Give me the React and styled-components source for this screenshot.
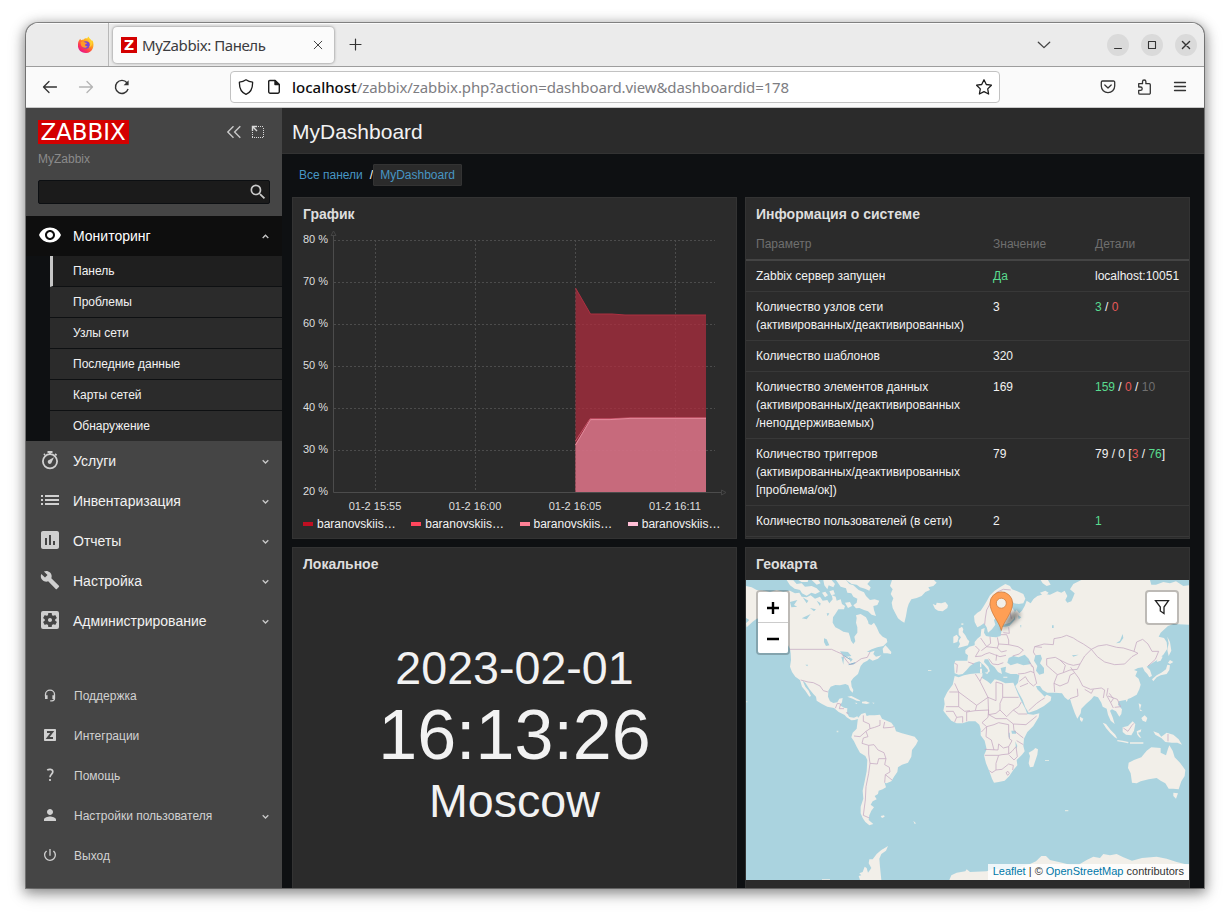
import React from "react";
import styled, { createGlobalStyle, css } from "styled-components";
import {
  MdVisibility, MdAssessment, MdBuild,
  MdSettingsApplications, MdPerson, MdPowerSettingsNew, MdSearch,
} from "react-icons/md";

const Global = createGlobalStyle`
  * { box-sizing: border-box; }
  html, body { margin: 0; background: #fff; }
  body { font: 12px/18px "Liberation Sans", Arial, sans-serif; color: #f2f2f2; overflow: hidden; }
`;

const Desktop = styled.div`
  height: 917px;
  padding: 23px 26px 29px;
`;
const Window = styled.div`
  width: 1178px;
  height: 865px;
  display: flex;
  flex-direction: column;
  overflow: hidden;
  border-radius: 12px 12px 0 0;
  background: #0e1012;
  box-shadow: 0 0 0 1px rgba(0,0,0,.38), 0 3px 12px 2px rgba(0,0,0,.36), 0 5px 20px rgba(0,0,0,.18);
`;

/* Browser chrome */
const TabBar = styled.div`
  height: 44px;
  flex: none;
  display: flex;
  align-items: center;
  background: #ebebeb;
  border-bottom: 1px solid #9d9d9d;
  box-shadow: inset 0 1px #fafafa;
`;
const PinnedTab = styled.div`
  width: 83px;
  height: 43px;
  padding: 13px 0 0 51px;
  border-right: 1px solid #b8b8b8;
`;
const Tab = styled.div`
  width: 221px;
  height: 36px;
  margin-left: 4px;
  padding: 0 8px 0 8px;
  display: flex;
  align-items: center;
  border-radius: 4px;
  background: #fbfbfb;
  box-shadow: 0 0 3px rgba(0,0,0,.5);
  color: #3c3c40;
`;
const TabTitle = styled.span`
  flex: 1;
  margin-left: 5px;
  font: 15px/20px "Noto Sans", "Open Sans", sans-serif;
  letter-spacing: -0.42px;
  white-space: nowrap;
`;
const Favicon = styled.span`
  width: 16px;
  height: 16px;
  background: #d40000;
  color: #fff;
  font: bold 14px/16px "DejaVu Sans", sans-serif;
  text-align: center;
`;
const NewTab = styled.div`
  margin-left: 14px;
  height: 16px;
`;
const WindowControls = styled.div`
  margin-left: auto;
  display: flex;
  align-items: center;
  padding-right: 7px;
  gap: 12px;
`;
const AllTabs = styled.span`
  display: flex;
  margin-right: 43px;
`;
const RoundButton = styled.span`
  width: 22px;
  height: 22px;
  border-radius: 50%;
  background: #dadada;
  display: flex;
`;
const NavBar = styled.div`
  height: 41px;
  flex: none;
  display: flex;
  align-items: center;
  padding: 0 16px;
  background: #fafafa;
  border-bottom: 1px solid #c9c9c9;
`;
const NavButtons = styled.div`
  display: flex;
  gap: 20px;
  width: 188px;
`;
const AddressBar = styled.div`
  width: 770px;
  height: 32px;
  display: flex;
  align-items: center;
  padding: 0 7px;
  background: #fff;
  border: 1px solid #c2c2c2;
  border-radius: 4px;
`;
const Url = styled.span`
  flex: 1;
  margin-left: 10px;
  color: #7d7d82;
  font: 15px/20px "Noto Sans", "Open Sans", sans-serif;
  letter-spacing: -0.11px;
  white-space: nowrap;
  b { color: #0c0c0d; font-weight: 500; letter-spacing: 0; }
`;
const PageIcon = styled.span`
  display: flex;
  margin-left: 12px;
`;
const ToolIcons = styled.div`
  display: flex;
  gap: 20px;
  margin-left: auto;
`;

/* Application */
const Page = styled.div`
  flex: 1;
  min-height: 0;
  display: flex;
`;
const Sidebar = styled.aside`
  width: 256px;
  flex: none;
  background: #454545;
`;
const Brand = styled.div`
  height: 108px;
  padding: 12px 12px 0;
`;
const BrandRow = styled.div`
  display: flex;
  align-items: center;
  height: 24px;
`;
const BrandTools = styled.div`
  display: flex;
  gap: 9px;
  margin-left: auto;
  margin-right: 5px;
`;
const ServerName = styled.div`
  margin-top: 6px;
  color: #8b8b8b;
`;
const Search = styled.div`
  height: 24px;
  margin-top: 12px;
  display: flex;
  align-items: center;
  justify-content: flex-end;
  padding-right: 1px;
  color: #c9c9c9;
  background: #1b1b1b;
  border: 1px solid #0c0f12;
  border-radius: 2px;
`;
const MenuRow = styled.div`
  height: 40px;
  display: flex;
  align-items: center;
  padding: 0 12px;
  font-size: ${(p) => (p.$small ? "12px" : "14px")};
  color: ${(p) => (p.$small ? "#d2d2d2" : "#f2f2f2")};
  ${(p) => p.$open && css`background: #0e0e0e; color: #fff;`}
`;
const MenuIcon = styled.span`
  width: 24px;
  display: flex;
  justify-content: center;
  margin-bottom: 2px;
  margin-right: ${(p) => (p.$small ? "12px" : "11px")};
  color: ${(p) => (p.$open ? "#fff" : "#d0d0d0")};
`;
const MenuLabel = styled.span`
  flex: 1;
`;
const Submenu = styled.div`
  padding-left: 24px;
  background: #0e1012;
`;
const SubItem = styled.div`
  height: ${(p) => (p.$last ? "30px" : "31px")};
  padding-left: ${(p) => (p.$active ? "20px" : "23px")};
  line-height: 30px;
  border-left: ${(p) => (p.$active ? "3px solid #c6c6c6" : "0")};
  border-bottom: ${(p) => (p.$last ? "0" : "1px solid #0e1012")};
  background: ${(p) => (p.$active ? "#1f1f1f" : "#2b2b2b")};
`;
const UserMenu = styled.div`
  margin-top: 35px;
`;

const Main = styled.main`
  flex: 1;
  display: flex;
  flex-direction: column;
  min-width: 0;
`;
const Header = styled.header`
  height: 46px;
  flex: none;
  padding: 0 10px;
  background: #2b2b2b;
  border-bottom: 1px solid #333;
  font-size: 21px;
  line-height: 47px;
`;
const Crumbs = styled.nav`
  display: flex;
  flex: none;
  height: 43px;
  padding: 10px 10px 0 17px;
  line-height: 22px;
  color: #fff;
`;
const Crumb = styled.a`
  color: #4796c4;
  ${(p) => p.$boxed && css`
    height: 22px;
    line-height: 20px;
    padding: 0 6px;
    background: #2b2b2b;
    border: 1px solid #333;
    border-radius: 1px;
  `}
`;
const Slash = styled.span`
  margin-left: 7px;
`;
const Grid = styled.div`
  flex: none;
  display: grid;
  grid-template-columns: 445px 445px;
  grid-template-rows: 342px 342px;
  gap: 8px;
  padding-left: 10px;
`;
const Panel = styled.section`
  background: #2b2b2b;
  border: 1px solid #333;
  overflow: hidden;
  min-width: 0;
`;
const PanelTitle = styled.h4`
  margin: 0;
  height: 32px;
  padding-left: 10px;
  font-size: 14px;
  line-height: 32px;
  color: #dedede;
`;
const Legend = styled.div`
  display: flex;
  padding: 2px 0 0 10px;
`;
const LegendItem = styled.div`
  width: 108.3px;
  display: flex;
  align-items: center;
  gap: 4px;
  white-space: nowrap;
  &::before {
    content: "";
    width: 10px;
    height: 4px;
    margin-top: -1px;
    background: ${(p) => p.$color};
  }
`;
const Clock = styled.div`
  padding-top: 61px;
  display: flex;
  flex-direction: column;
  align-items: center;
`;
const ClockLine = styled.div`
  font-size: ${(p) => (p.$big ? "70px" : "46.6px")};
  line-height: ${(p) => (p.$big ? "80px" : "54px")};
  &:last-child { line-height: 52px; }
`;
const Info = styled.div`
  display: grid;
`;
const InfoRow = styled.div`
  display: grid;
  grid-template-columns: 237px 102px 1fr;
  padding: 6px 0 6px 10px;
  border-bottom: 1px solid #383838;
  ${(p) => p.$head && css`
    height: 31px;
    padding-top: 5px;
    border-bottom: 2px solid #444;
    color: #6f6f6f;
  `}
`;
const Tint = styled.span`
  color: ${(p) => ({ green: "#59db8f", red: "#e45959", grey: "#6f6f6f" })[p.$tone]};
`;

const MapBox = styled.div`
  position: relative;
  height: 300px;
  width: 443px;
`;
const ZoomControl = styled.div`
  position: absolute;
  left: 10px;
  top: 10px;
  width: 34px;
  border: 2px solid rgba(0,0,0,.22);
  background-clip: padding-box;
  border-radius: 4px;
  overflow: hidden;
`;
const ZoomButton = styled.div`
  height: ${(p) => (p.$first ? "31px" : "30px")};
  padding-top: 2px;
  border-bottom: ${(p) => (p.$first ? "1px solid #ccc" : "0")};
  background: #fff;
  display: flex;
  align-items: center;
  justify-content: center;
`;
const FilterControl = styled.div`
  position: absolute;
  right: 10px;
  top: 10px;
  width: 34px;
  height: 35px;
  border: 2px solid rgba(0,0,0,.22);
  border-radius: 4px;
  background: #fff;
  background-clip: padding-box;
  display: flex;
  align-items: center;
  justify-content: center;
  padding-bottom: 1px;
`;
const Attribution = styled.div`
  position: absolute;
  right: 0;
  bottom: 0;
  height: 16px;
  padding: 0 5px;
  font-size: 11px;
  line-height: 15px;
  color: #333;
  background: rgba(255,255,255,.8);
  white-space: nowrap;
  a { color: #0078a8; }
`;
const Pin = styled.svg`
  position: absolute;
  left: 243px;
  top: 11px;
`;

const Line = ({ d, size = 16, w = 1.3, color = "#333", ...rest }) => (
  <svg width={size} height={size} viewBox="0 0 16 16" fill="none" stroke={color} strokeWidth={w}
    strokeLinecap="round" strokeLinejoin="round" {...rest}><path d={d} /></svg>
);

const Firefox = () => (
  <svg width="18" height="18" viewBox="0 0 18 18">
    <defs>
      <linearGradient id="fox" x1=".8" y1=".1" x2=".2" y2=".95">
        <stop offset="0" stopColor="#ffe226" /><stop offset=".4" stopColor="#ff9020" />
        <stop offset=".7" stopColor="#ff3b50" /><stop offset="1" stopColor="#e5158b" />
      </linearGradient>
    </defs>
    <path d="M2 4.5 3.2 2.8 4 4.3C5 3.5 6 3.3 7 3.4 7.8 1.8 9.6 2.2 10.2 2.6 10.4 1.5 11 .8 11.6.4 12 2.2 14 3 14.8 4.8L15.6 4.5C18 10 15.5 17 9 17 3.5 17 .5 13 1 8.5 1 7 1.4 5.5 2 4.5Z" fill="url(#fox)" />
    <circle cx="9" cy="9" r="3.7" fill="#7746dc" />
    <path d="M3.5 6.5C5 5 7 5.5 8 6.5L10 7C9.8 8 8.5 8 8 8.6 8 10 9 10.5 10.6 10 9.5 13 5 12 4 9Z" fill="#ff9a28" />
    <path d="M10 3C14 5 14 9 12 11.5 15 10.5 16 7 14.5 5Z" fill="#ffcf34" />
  </svg>
);

const Chevron = ({ up }) => (
  <svg width="9" height="8" viewBox="-.5 0 9 8" fill="none" stroke="#c8c8c8" strokeWidth="1.3">
    <path d={up ? "M1.2 6 4 3.2 6.8 6" : "M1.2 3.2 4 6 6.8 3.2"} />
  </svg>
);

const TimerIcon = () => (
  <svg width="24" height="24" viewBox="0 0 24 24" fill="none" stroke="#d0d0d0">
    <circle cx="12" cy="13.3" r="7.1" strokeWidth="1.8" />
    <path d="M9.5 4h5M12 4v2M17 6l1.6 1.4M6 7l1-1" strokeWidth="1.8" />
    <path d="M16 9.2 13.7 14.2A2 2 0 1 1 11 12Z" fill="#d0d0d0" stroke="none" />
  </svg>
);
const ListIcon = () => (
  <svg width="18" height="10" viewBox="0 0 18 10" stroke="#d0d0d0" strokeWidth="2">
    <path d="M0 1H2M4 1H18M0 5H2M4 5H18M0 9H2M4 9H18" />
  </svg>
);
const Headset = () => (
  <svg width="12" height="13" viewBox="0 0 12 13" fill="none" stroke="#d0d0d0">
    <path d="M1.5 7.5V5.4A4.5 4.3 0 0 1 10.5 5.4V9.3Q10.5 11.8 8 11.8H6.2" strokeWidth="1.3" />
    <path d="M2.3 6.2V10M9.7 6.2V10" strokeWidth="2.6" />
  </svg>
);
const ZSquare = () => (
  <svg width="12" height="12" viewBox="0 0 12 12">
    <rect width="12" height="12" rx=".8" fill="#d0d0d0" />
    <path d="M3 3.1H8.2L3.7 8.9H9" fill="none" stroke="#454545" strokeWidth="2" />
  </svg>
);
const Question = () => (
  <svg width="12" height="14" viewBox="0 0 12 14" fill="none" stroke="#d0d0d0" strokeWidth="1.7">
    <path d="M3.2 2.2C4.8 .9 8.8 .9 8.8 3.8 8.8 6 6 6.2 6 9.3M6 11v2" />
  </svg>
);

const Chart = () => (
  <svg width="443" height="283" viewBox="293 230 443 283" style={{ display: "block" }}>
    <g stroke="#4c4c4c" strokeDasharray="2 2">
      {[240.5, 282.5, 324.5, 366.5, 408.5, 450.5].map((y) => <path key={y} d={`M334 ${y}H715`} />)}
      {[375.5, 475.5, 575.5, 675.5].map((x) => <path key={x} d={`M${x} 240V492`} />)}
    </g>
    <path d="M333.5 235V492.5H721" fill="none" stroke="#4c4c4c" />
    <path d="M331 235.5h5L333.5 231ZM721.5 490v5L726 492.5Z" fill="none" stroke="#454545" />
    <path d="M575.5 288 590.5 314 612 314 625 315H706V492H575.5Z" fill="#b22d3e" fillOpacity=".72" />
    <path d="M575.5 288 590.5 314 612 314 625 315H706" fill="none" stroke="#ad3041" />
    <path d="M575.5 444 590.5 419.3H610L630 418.2H706V492H575.5Z" fill="#dc8094" fillOpacity=".74" />
    <path d="M575.5 441 590 418.8H610L630 417.8H706" fill="none" stroke="#c85268" />
    <path d="M575.5 445 590.5 419.6H610L630 418.4H706" fill="none" stroke="#e48a9b" />
    <g fill="#dedede" fontSize="11" fontFamily="Liberation Sans, Arial, sans-serif">
      {[80, 70, 60, 50, 40, 30, 20].map((v, i) => (
        <text key={v} x="328" y={243 + i * 42} textAnchor="end">{v} %</text>
      ))}
      {["15:55", "16:00", "16:05", "16:11"].map((t, i) => (
        <text key={t} x={375 + i * 100} y="510" textAnchor="middle">01-2 {t}</text>
      ))}
    </g>
  </svg>
);

/* Coastlines, three units to a pixel */
const LAND = [
  // North and Central America
  "M18 138 35 142 50 150 75 152 90 156 110 150 130 155 150 152 165 160 178 158 185 170 200 172 212 166 225 176 240 170 248 182 262 180 268 190 278 178 275 165 287 170 290 182 302 178 306 192 315 198 312 208 295 208 286 222 279 232 278 248 286 262 298 268 310 275 326 278 330 290 333 302 340 312 346 304 343 290 352 278 352 262 348 248 350 234 348 226 362 222 378 232 384 244 386 252 394 255 402 248 410 262 418 280 428 290 440 296 442 306 430 318 412 322 395 328 380 336 392 336 404 332 400 342 408 350 424 346 414 356 398 362 388 356 382 362 370 368 362 378 358 390 354 402 340 414 333 424 335 440 340 450 338 458 330 450 325 436 316 432 300 436 286 435 272 440 265 452 264 470 270 484 280 489 292 487 298 476 308 474 306 487 300 496 312 503 322 505 321 520 328 531 342 533 352 529 356 536 344 540 334 541 320 532 314 525 296 516 282 504 262 500 246 492 230 482 228 470 220 462 208 447 196 428 188 422 196 440 206 452 213 468 208 470 196 452 186 440 180 420 166 410 156 396 150 380 153 360 152 340 150 326 142 312 130 295 118 272 100 250 80 240 62 235 50 236 38 245 20 262 18 250 28 240 18 234Z",
  // Arctic islands
  "M140 120 160 121 170 132 185 130 195 140 215 138 230 145 240 155 226 162 214 158 200 167 186 160 180 150 164 146 150 136Z",
  "M175 120H205L203 126 185 126ZM215 120H235L242 130 230 134ZM250 120H275L285 132 280 142 266 136 262 148 253 136ZM288 120H318L328 132 340 136 356 150 372 157 378 168 390 180 404 178 418 182 412 195 400 198 402 210 408 228 395 224 384 214 372 210 358 204 348 205 340 196 350 188 352 176 340 170 334 160 322 158 318 145 302 140Z",
  "M318 120H392L382 132 392 142 388 152 375 146 360 142 350 134 335 132ZM268 154 280 150 285 163 274 166ZM315 188 330 186 336 198 324 204ZM246 158 256 155 264 166 255 172Z",
  "M428 326 436 316 442 322 454 336 453 342 442 340 430 340Z",
  // Greenland and Iceland
  "M456 120H582L590 128 580 138 565 142 570 150 556 156 545 168 530 174 514 178 506 192 502 205 498 228 493 248 484 243 474 235 466 220 458 204 455 188 460 175 452 162 458 148 450 138Z",
  "M578 192 588 196 590 188 604 190 616 186 624 196 622 204 608 214 594 212 585 206Z",
  // British Isles
  "M656 266 666 260 670 268 668 276 676 286 682 298 688 304 684 316 668 320 654 324 660 312 656 302 663 292 656 284ZM640 290 650 284 656 292 652 306 640 310Z",
  // Caribbean
  "M322 470 334 468 346 474 358 480 362 484 350 482 338 476ZM366 485 378 484 390 489 380 492 366 490ZM396 488 403 488 402 491ZM344 488 352 489 350 492Z",
  // Scandinavia
  "M704 246 702 228 712 218 722 212 730 200 740 184 750 166 764 152 782 140 796 132 810 138 816 148 832 154 850 162 856 176 850 190 836 192 822 190 814 180 814 200 824 214 822 236 810 248 790 254 782 244 782 228 788 208 778 206 772 228 762 240 766 254 756 268 744 278 740 262 732 250 720 258 712 262Z",
  // Eurasia
  "M786 262 782 288 768 292 750 290 738 288 732 278 734 264 724 268 722 288 712 296 704 306 704 316 688 320 676 330 676 340 684 346 682 362 646 362 642 374 644 400 656 404 668 402 680 390 690 378 704 368 718 364 732 376 744 390 742 398 750 394 745 380 732 366 734 358 744 358 752 372 764 382 774 396 786 402 782 384 798 380 796 396 812 402 830 402 838 406 834 428 826 438 836 458 848 480 856 502 866 518 890 510 912 498 932 482 934 470 920 464 914 470 904 460 892 448 888 438 900 438 908 450 922 458 944 458 966 460 974 472 984 480 990 476 996 496 1004 518 1012 536 1022 520 1024 506 1038 492 1054 478 1062 468 1074 472 1084 488 1088 500 1100 506 1104 524 1112 542 1124 552 1118 532 1110 512 1116 508 1128 514 1138 530 1144 522 1146 508 1134 494 1136 484 1144 482 1156 480 1172 474 1190 464 1198 448 1202 434 1196 416 1186 408 1192 394 1182 390 1194 384 1208 382 1214 394 1222 402 1228 412 1236 408 1230 390 1220 380 1236 370 1252 360 1270 344 1282 326 1280 306 1272 294 1256 290 1262 278 1284 258 1300 252 1347 254V136L1330 138 1308 124 1290 130 1270 126 1248 134 1234 134 1230 120H1024L1000 132 990 148 1004 160 1000 170 994 184 982 188 976 180 982 168 974 152 964 158 952 154 930 164 914 162 898 168 880 178 872 190 860 182 854 198 846 212 838 220 830 210 820 222 826 238 808 258Z",
  "M1256 346 1268 350 1262 362 1250 366ZM880 178 892 168 906 164 900 158 916 152 926 158 918 166 902 172 890 180ZM902 120H924L932 134 920 138 908 130Z",
  // Japan and Sakhalin
  "M1290 360 1300 366 1290 372 1284 368ZM1282 374 1290 376 1288 390 1280 402 1262 406 1250 412 1240 424 1236 418 1250 406 1264 398 1278 388ZM1282 290 1290 306 1294 332 1286 348 1282 330 1286 310Z",
  // Mediterranean islands
  "M720 386h6v14h-6ZM720 370h4v12h-4ZM734 398 746 396 742 402ZM790 410h12v3h-12Z",
  // Africa and Madagascar
  "M644 408 656 412 672 406 690 402 712 400 728 400 726 414 742 424 752 432 764 418 780 422 796 430 820 428 824 438 834 462 844 484 856 506 862 522 880 524 898 520 896 532 880 558 862 576 852 596 850 618 854 634 846 644 830 660 832 676 820 690 808 708 794 722 776 726 762 728 756 716 748 694 738 670 732 646 740 628 734 602 722 586 722 568 718 554 706 544 686 544 668 550 650 550 634 542 622 528 610 512 614 492 612 476 622 456 638 434Z",
  "M886 624 894 628 892 644 886 662 880 680 870 682 866 670 870 648 866 638 880 630Z",
  // South America
  "M354 534 364 522 376 518 380 528 388 526 404 526 420 524 426 536 440 542 454 548 464 562 468 574 486 580 508 586 524 590 534 602 528 614 516 630 514 650 504 668 486 674 474 682 472 696 462 710 454 724 440 730 434 728 438 742 428 748 416 752 414 762 404 768 410 778 398 784 392 794 402 802 394 812 388 826 386 840 400 852 388 856 376 846 368 834 362 820 362 800 370 776 368 752 374 724 380 694 382 660 376 648 360 638 350 620 342 604 334 592 338 578 350 566 352 550Z",
  // Southeast Asia and Oceania
  "M1088 548 1098 552 1112 570 1126 584 1132 596 1124 592 1110 578 1098 564ZM1132 600 1148 602 1166 606 1164 610 1146 606 1132 604ZM1148 562 1164 558 1178 544 1186 552 1182 572 1174 586 1158 584 1148 576ZM1190 574 1204 568 1202 576 1194 578 1204 594 1198 592 1192 584ZM1196 490 1204 494 1200 508 1208 514 1200 512ZM1204 534 1214 526 1222 534 1218 546 1208 542ZM1240 574 1256 580 1264 590 1280 578 1300 584 1316 598 1326 614 1312 608 1296 608 1276 606 1264 594 1246 584ZM1156 478h8l-4 8ZM1020 530 1030 536 1026 546 1020 540ZM1170 607h40v4h-40Z",
  "M1166 668 1182 660 1204 652 1220 632 1234 622 1262 624 1262 638 1278 646 1284 626 1288 616 1298 632 1304 652 1320 668 1336 690 1334 708 1324 724 1316 748 1300 746 1286 746 1276 730 1262 722 1250 714 1226 718 1202 724 1190 730 1176 728 1172 700 1164 684ZM1300 758 1314 760 1308 776 1300 768Z",
  // Antarctica
  "M360 1020 356 1008 364 1006 358 1000 368 996 374 980 380 984 384 998 394 984 386 970 388 958 398 958 410 942 424 930 438 922 444 918 438 932 424 942 418 956 420 980 424 1020ZM628 1020 634 1006 650 998 676 994 680 988 690 996 740 994 760 986 800 990 830 984 870 972 888 964 904 948 918 948 930 960 966 968 990 974 1016 974 1040 960 1060 950 1080 954 1090 942 1110 946 1130 942 1150 952 1176 962 1206 954 1250 950 1280 956 1310 966 1334 972 1347 974V1020ZM246 1018h24v4h-24ZM422 828l10-2 2 4-8 4ZM520 842l8 8-4 2Z",
];
const WATER = [
  "M802 368 806 354 820 348 836 352 854 344 866 356 874 372 850 376 832 370 812 376Z",
  "M886 346 902 344 906 356 900 370 912 384 912 400 898 404 888 392 892 378 882 362Z",
  "M188 172 205 182 200 190ZM150 186 172 180 162 195 172 200 154 202ZM185 235 212 222 200 238ZM252 295 260 298 268 316 258 318 252 306ZM300 334 324 336 334 348 320 350 308 346ZM304 350 312 350 310 374ZM326 350 338 358 332 366ZM326 374 344 368 340 374ZM196 374h8l-2 5ZM210 204 228 208 222 214ZM230 182 242 190 240 198ZM260 220h8l-5 9Z",
  "M1128 310 1140 302 1148 282 1150 294 1140 308ZM996 346 1016 344 1000 350ZM814 572h14v9h-12ZM806 578h3l1 20-4-8ZM826 604 832 618 828 628ZM840 256h4l-1 8ZM834 226 844 232 836 238ZM936 256h5v8h-5Z",
];
const BORDERS =
  "M150 328H275L290 335 306 342 318 360 330 374 344 370 364 356 382 352 390 336M182 420 204 426 220 428 240 438 250 452 264 456M286 505 292 490 302 492 298 506 312 506M318 518 326 520" +
  "M370 526 370 544 388 552 390 566 378 574 384 590 370 594 366 610 386 616 386 642 390 670 386 700 378 740 376 780 370 826 388 834M342 588 360 590 378 574M390 566 404 562 420 556 420 540M434 546 430 564 454 562 462 560M386 616 402 614 414 630 432 638 438 656 416 656 412 672 390 670M438 656 434 674 448 682 450 696 436 704 456 720M436 704 434 728" +
  "M644 370 652 374 650 398M684 366 702 372M706 318 718 330 706 350 724 348 736 342M722 294 740 320 724 332M750 290 752 310 740 320 756 322 772 324 776 312 772 292M776 312 806 314 806 300 800 284 782 284M806 314 834 320 850 330 838 342 818 348M772 324 784 336 800 332M736 342 748 338 764 344 780 350 798 346M746 356 758 372 774 374 790 368M770 344 768 362M734 254 736 234 740 210 752 188 772 156 790 148 812 150M792 154 800 180 808 202 814 236M806 262 808 280 790 278" +
  "M834 402 854 400 872 394 882 398 880 382 866 364M880 382 872 376M882 398 890 430 880 438 866 426 856 410 838 424M840 440 864 430M866 512 890 490 904 480 914 474M906 322 884 320 880 336 886 346M884 320 912 312 940 314 942 296 964 292 980 286 1000 294 1012 302 1030 312 1054 328 1034 348 1020 372 1000 376 984 372 960 360 946 352 920 356 920 376 938 392 952 404 970 398 990 390 1012 388 1020 372M952 404 942 430 944 456M942 430 960 438 984 428 990 406 1004 398 1016 414 1028 438 1052 448 1068 446 1084 444 1094 450 1090 474M1054 328 1074 318 1100 314 1130 322 1150 324 1182 334 1194 340 1176 350 1154 372 1124 374 1094 366 1072 350 1054 328M1182 334 1190 306 1208 298 1224 312 1236 334 1256 334 1246 358 1224 378M1004 398 992 382M970 398 976 376 960 360M1012 446 1014 468 990 476M1034 448 1054 460 1060 448M1104 444 1100 466 1112 488 1120 476 1108 460M1104 468 1132 478 1142 500 1124 502M1112 488 1120 504" +
  "M644 430 656 456 628 456M656 456V500H618M656 456 710 496 744 472 720 424 706 402M720 424 726 410M744 472 768 482 768 426 788 432 788 472 836 472M788 472 780 490 780 510 768 520 746 524 744 472M710 496 706 512 680 516 680 544M656 500 674 514 690 512M618 514 640 514 650 532 644 546M650 532 668 530 668 548M706 512 746 510 744 532 726 548 740 560 724 576M746 524 768 536 800 536 820 552 858 554 890 528M780 510 800 530 820 510 836 500 844 486M820 510 836 522 862 522M740 560 762 554 776 548 806 554 806 576 808 596 816 602 806 620 790 624 776 612 774 630 734 628M740 560 738 590 754 600 762 630M734 646 776 646 786 644 806 642 816 634 828 620 832 650 822 660 808 646M776 646 768 670 768 690 756 698 748 692M768 690 786 688 806 672 820 676 818 690M806 642 806 620M830 602 850 614M820 552 822 572 850 594M798 698l6-4 4 6-5 6Z" +
  "M1150 564 1164 574 1176 556 1182 550M1284 582V604";

const WorldMap = () => (
  <svg width="443" height="300" viewBox="0 0 443 300" style={{ display: "block", background: "#aad3df" }}>
    <g transform="translate(-6 -40) scale(.33333)">
      {LAND.map((d, i) => <path key={i} d={d} fill="#f2efe9" />)}
      {WATER.map((d, i) => <path key={i} d={d} fill="#aad3df" />)}
      <path d={BORDERS} fill="none" stroke="#c6aac3" strokeWidth="2.3" strokeLinejoin="round" />
      <path d="M310 346 330 358M326 374 346 368" stroke="#8db5cf" strokeWidth="3" />
      <g fill="#e0eae5">
        <path d="M290 572h5v5h-5ZM975 810h10v4h-10ZM915 660h12v3h-12ZM564 390h10v3h-10ZM664 250h6v5h-6ZM18 484h4v3h-4Z" />
      </g>
    </g>
  </svg>
);

const submenu = ["Панель", "Проблемы", "Узлы сети", "Последние данные", "Карты сетей", "Обнаружение"];
const sections = [
  ["Услуги", <TimerIcon key="i" />],
  ["Инвентаризация", <ListIcon key="i" />],
  ["Отчеты", <MdAssessment key="i" size={24} />],
  ["Настройка", <MdBuild key="i" size={20} />],
  ["Администрирование", <MdSettingsApplications key="i" size={24} />],
];
const userItems = [
  ["Поддержка", <Headset key="i" />],
  ["Интеграции", <ZSquare key="i" />],
  ["Помощь", <Question key="i" />],
  ["Настройки пользователя", <MdPerson key="i" size={18} />, true],
  ["Выход", <MdPowerSettingsNew key="i" size={16} />],
];
const G = (p) => <Tint $tone="green">{p.children}</Tint>;
const R = (p) => <Tint $tone="red">{p.children}</Tint>;
const info = [
  [["Zabbix сервер запущен"], <G>Да</G>, "localhost:10051"],
  [["Количество узлов сети", "(активированных/деактивированных)"], "3", <><G>3</G> / <R>0</R></>],
  [["Количество шаблонов"], "320", ""],
  [["Количество элементов данных", "(активированных/деактивированных", "/неподдерживаемых)"], "169",
    <><G>159</G> / <R>0</R> / <Tint $tone="grey">10</Tint></>],
  [["Количество триггеров", "(активированных/деактивированных", "[проблема/ок])"], "79",
    <>79 / 0 [<R>3</R> / <G>76</G>]</>],
  [["Количество пользователей (в сети)"], "2", <G>1</G>],
];

export default function App() {
  return (
    <Desktop>
      <Global />
      <Window>
        <TabBar>
          <PinnedTab><Firefox /></PinnedTab>
          <Tab>
            <Favicon>Z</Favicon>
            <TabTitle>MyZabbix: Панель</TabTitle>
            <Line d="M4.2 4.2 11.8 11.8M11.8 4.2 4.2 11.8" w={1} color="#444" />
          </Tab>
          <NewTab><Line d="M7.5 2V13M2 7.5H13" w={1.2} /></NewTab>
          <WindowControls>
            <AllTabs><Line d="M2.3 5.2 8 10.6 13.7 5.2" w={1.3} color="#444" /></AllTabs>
            <RoundButton><Line size={22} d="M5.5 10.5H10.5" w={0.8} /></RoundButton>
            <RoundButton><Line size={22} d="M5.45 5.45H10.55V10.55H5.45Z" w={0.8} /></RoundButton>
            <RoundButton><Line size={22} d="M5.4 5.4 10.6 10.6M10.6 5.4 5.4 10.6" w={1} /></RoundButton>
          </WindowControls>
        </TabBar>
        <NavBar>
          <NavButtons>
            <Line d="M14.5 8H1.5M7 2.5 1.5 8 7 13.5" w={1.3} />
            <Line d="M1.5 8H14.5M9 2.5 14.5 8 9 13.5" w={1.3} color="#b4b4b4" />
            <svg width="16" height="16" viewBox="0 0 16 16" fill="none" stroke="#333" strokeWidth="1.4">
              <path d="M14.1 10A6.5 6.5 0 1 1 13 3.8" /><path d="M14.6 1.2V6.2H9.6Z" fill="#333" stroke="none" />
            </svg>
          </NavButtons>
          <AddressBar>
            <Line d="M8 .8C10 2.3 12.3 3 14.6 3.1 14.8 9.3 12.3 13.6 8 15.4 3.7 13.6 1.2 9.3 1.4 3.1 3.7 3 6 2.3 8 .8Z" w={1.3} color="#1d1d1d" />
            <PageIcon>
              <svg width="16" height="16" viewBox="0 0 16 16" fill="none" stroke="#1d1d1d" strokeWidth="1.4" strokeLinejoin="round">
                <path d="M3.8 1.5H9L13.3 5.5V12.7A1.5 1.5 0 0 1 11.8 14.2H4.2A1.5 1.5 0 0 1 2.7 12.7V2.6A1.1 1.1 0 0 1 3.8 1.5Z" />
                <path d="M9 1.5V5.5H13Z" fill="#1d1d1d" />
              </svg>
            </PageIcon>
            <Url><b>localhost</b>/zabbix/zabbix.php?action=dashboard.view&amp;dashboardid=178</Url>
            <Line d="M8 .8 10.3 5.5 15.4 6.2 11.7 9.9 12.6 15 8 12.6 3.4 15 4.3 9.9.6 6.2 5.7 5.5Z" w={1.3} color="#1d1d1d" />
          </AddressBar>
          <ToolIcons>
            <Line d="M2.5 2H13.5A1.2 1.2 0 0 1 14.7 3.2V7A6.7 6.7 0 0 1 1.3 7V3.2A1.2 1.2 0 0 1 2.5 2ZM4.8 6 8 9 11.2 6" w={1.3} />
            <Line d="M2.7 4.7H6.5V2.7A1.7 1.7 0 0 1 9.9 2.7V4.7H13.3A1 1 0 0 1 14.3 5.7V14A1.2 1.2 0 0 1 13.1 15.2H3.9A1.2 1.2 0 0 1 2.7 14V11.4H4.5A1.7 1.7 0 0 0 4.5 8H2.7Z" w={1.3} />
            <Line d="M2.5 3.5H13.5M2.5 7.5H13.5M2.5 11.5H13.5" w={1.3} />
          </ToolIcons>
        </NavBar>

        <Page>
          <Sidebar>
            <Brand>
              <BrandRow>
                <svg width="91" height="24" viewBox="0 0 91 24">
                  <rect width="91" height="24" fill="#d40000" />
                  <text x="2.4" y="20" fill="#fff" fontSize="22.5" textLength="85.4" lengthAdjust="spacingAndGlyphs"
                    fontFamily="DejaVu Sans, sans-serif">ZABBIX</text>
                </svg>
                <BrandTools>
                  <svg width="16" height="14" viewBox="0 0 16 14" fill="none" stroke="#c8c8c8" strokeWidth="1.4">
                    <path d="M7.5 1.2 1.8 7 7.5 12.8M14.3 1.2 8.6 7 14.3 12.8" />
                  </svg>
                  <svg width="14" height="14" viewBox="0 0 14 14" fill="none" stroke="#d8d8d8">
                    <path d="M7 1.5H13M12.5 3V13M1 12.5H13M1.5 7V13" strokeDasharray="1 1" />
                    <path d="M1.5 6V1.5H6M2 2 6 6" strokeWidth="1.4" />
                  </svg>
                </BrandTools>
              </BrandRow>
              <ServerName>MyZabbix</ServerName>
              <Search><MdSearch size={20} /></Search>
            </Brand>
            <MenuRow $open>
              <MenuIcon $open><MdVisibility size={24} /></MenuIcon>
              <MenuLabel>Мониторинг</MenuLabel>
              <Chevron up />
            </MenuRow>
            <Submenu>
              {submenu.map((t, i) => (
                <SubItem key={t} $active={i === 0} $last={i === submenu.length - 1}>{t}</SubItem>
              ))}
            </Submenu>
            {sections.map(([label, icon]) => (
              <MenuRow key={label}>
                <MenuIcon>{icon}</MenuIcon>
                <MenuLabel>{label}</MenuLabel>
                <Chevron />
              </MenuRow>
            ))}
            <UserMenu>
              {userItems.map(([label, icon, more]) => (
                <MenuRow key={label} $small>
                  <MenuIcon $small>{icon}</MenuIcon>
                  <MenuLabel>{label}</MenuLabel>
                  {more && <Chevron />}
                </MenuRow>
              ))}
            </UserMenu>
          </Sidebar>

          <Main>
            <Header>MyDashboard</Header>
            <Crumbs>
              <Crumb>Все панели</Crumb>
              <Slash>/</Slash>
              <Crumb $boxed>MyDashboard</Crumb>
            </Crumbs>
            <Grid>
              <Panel>
                <PanelTitle>График</PanelTitle>
                <Chart />
                <Legend>
                  {["#bf0f22", "#ff465c", "#ff8095", "#ffbfd6"].map((c) => (
                    <LegendItem key={c} $color={c}>baranovskiis…</LegendItem>
                  ))}
                </Legend>
              </Panel>
              <Panel>
                <PanelTitle>Информация о системе</PanelTitle>
                <Info>
                  <InfoRow $head><span>Параметр</span><span>Значение</span><span>Детали</span></InfoRow>
                  {info.map(([name, value, details]) => (
                    <InfoRow key={name[0]}>
                      <span>{name.map((t) => <div key={t}>{t}</div>)}</span>
                      <span>{value}</span>
                      <span>{details}</span>
                    </InfoRow>
                  ))}
                </Info>
              </Panel>
              <Panel>
                <PanelTitle>Локальное</PanelTitle>
                <Clock>
                  <ClockLine>2023-02-01</ClockLine>
                  <ClockLine $big>16:13:26</ClockLine>
                  <ClockLine>Moscow</ClockLine>
                </Clock>
              </Panel>
              <Panel>
                <PanelTitle>Геокарта</PanelTitle>
                <MapBox>
                  <WorldMap />
                  <Pin width="42" height="42" viewBox="0 0 42 42">
                    <defs><filter id="soft" x="-50%" y="-50%" width="200%" height="200%"><feGaussianBlur stdDeviation="2.6" /></filter></defs>
                    <path d="M12 39 20 24Q26 17 31 22 32 29 12 39Z" fill="#000" opacity=".42" filter="url(#soft)" />
                    <path fillRule="evenodd" d="M12.3 39.5 C10.5 31 1 22 1 12.2A11.3 11.3 0 0 1 23.6 12.2C23.6 22 14 31 12.3 39.5ZM12.3 7.2a5 5 0 1 0 0 10 5 5 0 0 0 0-10Z" fill="#ff9f55" stroke="#cf7d40" strokeWidth=".8" />
                  </Pin>
                  <ZoomControl>
                    <ZoomButton $first>
                      <svg width="14" height="14"><path d="M7 1V13M1 7H13" stroke="#000" strokeWidth="2.4" /></svg>
                    </ZoomButton>
                    <ZoomButton>
                      <svg width="14" height="14"><path d="M1 7H13" stroke="#000" strokeWidth="2.6" /></svg>
                    </ZoomButton>
                  </ZoomControl>
                  <FilterControl>
                    <svg width="16" height="16" viewBox="0 0 16 16" fill="none" stroke="#222" strokeWidth="1.3">
                      <path d="M1.5 1.7H14.5L10 8V14.5L6.3 12V8Z" />
                    </svg>
                  </FilterControl>
                  <Attribution><a>Leaflet</a> | © <a>OpenStreetMap</a> contributors</Attribution>
                </MapBox>
              </Panel>
            </Grid>
          </Main>
        </Page>
      </Window>
    </Desktop>
  );
}
